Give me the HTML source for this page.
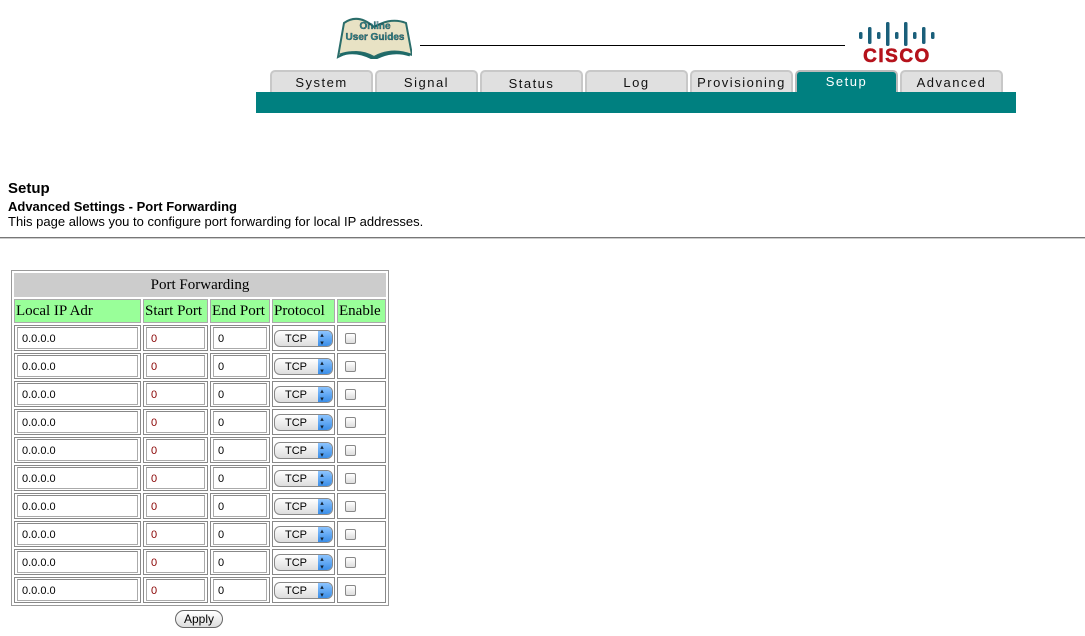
<!DOCTYPE html>
<html><head><meta charset="utf-8"><style>
body{margin:0;width:1085px;height:636px;background:#fff;position:relative;overflow:hidden;font-family:"Liberation Sans",sans-serif}
.a{position:absolute}
.tab{position:absolute;top:70px;height:22px;width:100px;background:#e0e0e0;border:2px solid #c8c8c8;border-bottom:none;border-radius:5px 5px 0 0;box-sizing:border-box;text-align:center;font-size:13px;letter-spacing:1.5px;line-height:22px;color:#111}
table{position:absolute;left:11px;top:270px;border:1px solid #999;border-spacing:2px;border-collapse:separate;table-layout:fixed;width:376px}
td{padding:0;box-sizing:border-box;border:1px solid #888;height:26px;font-family:"Liberation Serif",serif;font-size:15px;overflow:hidden}
td.h{background:#ccc;text-align:center;height:24px;border:none}
td.g{background:#9f9;height:24px;border:1px solid #aaa;white-space:nowrap;padding-left:1px}
.in{display:block;margin:0 2px;height:22px;border:1px solid #aaa;border-top-color:#888;font-family:"Liberation Sans",sans-serif;font-size:11px;line-height:22px;padding-left:4px;box-sizing:border-box}
.sel{display:block;margin:0 1px;width:59px;height:17px;border:1px solid #888;border-radius:6px;background:linear-gradient(#fff,#ddd);font-family:"Liberation Sans",sans-serif;font-size:11px;line-height:16px;position:relative;box-sizing:border-box;padding-left:10px}
.sel:after{content:"▴▾";position:absolute;right:0;top:0;width:14px;height:15px;background:linear-gradient(#8cc4ff,#3b8ee8);border-radius:0 5px 5px 0;font-size:7px;line-height:7px;color:#123;text-align:center;writing-mode:vertical-lr}
.cb{display:block;margin-left:7px;width:11px;height:11px;border:1px solid #888;border-radius:2px;background:linear-gradient(#fff,#ddd);box-sizing:border-box}
</style></head><body>
<div class="a" style="left:336px;top:15px;width:76px;height:44px">
<svg width="76" height="44"><path d="M8 8 Q22 -2 38 12 Q55 2 70 8 L76 40 Q56 32 38 42 Q20 32 2 42 Z" fill="#e8e2c4" stroke="#2a6d6a" stroke-width="2"/><path d="M4 40 Q20 34 38 44 Q56 34 74 40" fill="none" stroke="#1f6a68" stroke-width="3"/></svg>
<div class="a" style="left:4px;top:6px;width:70px;text-align:center;font-size:10px;font-weight:bold;color:#2a8a8c;line-height:11px;-webkit-text-stroke:0.3px #123">Online<br>User Guides</div></div>
<div class="a" style="left:420px;top:45px;width:425px;height:1px;background:#000"></div>
<svg class="a" style="left:858px;top:20px" width="80" height="44">
<g fill="#1a5f7a"><rect x="1" y="12" width="3.5" height="7" rx="1.5"/><rect x="10" y="7" width="3.5" height="17" rx="1.5"/><rect x="19" y="12" width="3.5" height="7" rx="1.5"/><rect x="28" y="2" width="3.5" height="24" rx="1.5"/><rect x="37" y="12" width="3.5" height="7" rx="1.5"/><rect x="46" y="2" width="3.5" height="24" rx="1.5"/><rect x="55" y="12" width="3.5" height="7" rx="1.5"/><rect x="64" y="7" width="3.5" height="17" rx="1.5"/><rect x="73" y="12" width="3.5" height="7" rx="1.5"/></g>
<text x="39" y="42" text-anchor="middle" font-family="Liberation Sans" font-weight="bold" font-size="19" fill="#b5121b" letter-spacing="1.5" stroke="#b5121b" stroke-width="0.6">CISCO</text></svg>
<div class="tab" style="left:270px;width:103px">System</div>
<div class="tab" style="left:375px;width:103px">Signal</div>
<div class="tab" style="left:480px;width:103px;line-height:24px">Status</div>
<div class="tab" style="left:585px;width:103px">Log</div>
<div class="tab" style="left:690px;width:103px">Provisioning</div>
<div class="tab" style="left:795px;width:103px;background:#008080;color:#fff;border-color:#bbb;line-height:20px">Setup</div>
<div class="tab" style="left:900px;width:103px">Advanced</div>
<div class="a" style="left:256px;top:92px;width:760px;height:21px;background:#008080"></div>
<div class="a" style="left:8px;top:180px;font-size:15px;font-weight:bold">Setup</div>
<div class="a" style="left:8px;top:199px;font-size:13px;font-weight:bold">Advanced Settings - Port Forwarding</div>
<div class="a" style="left:8px;top:214px;font-size:13px">This page allows you to configure port forwarding for local IP addresses.</div>
<div class="a" style="left:0;top:237px;width:1085px;height:1px;background:#777;border-bottom:1px solid #ccc"></div>
<table>
<colgroup><col style="width:127px"><col style="width:65px"><col style="width:60px"><col style="width:63px"><col style="width:49px"></colgroup>
<tr><td class="h" colspan="5">Port Forwarding</td></tr>
<tr><td class="g">Local IP Adr</td><td class="g">Start Port</td><td class="g">End Port</td><td class="g">Protocol</td><td class="g">Enable</td></tr>
<tr><td><span class="in">0.0.0.0</span></td><td><span class="in" style="color:#800">0</span></td><td><span class="in">0</span></td><td><span class="sel">TCP</span></td><td><span class="cb"></span></td></tr>
<tr><td><span class="in">0.0.0.0</span></td><td><span class="in" style="color:#800">0</span></td><td><span class="in">0</span></td><td><span class="sel">TCP</span></td><td><span class="cb"></span></td></tr>
<tr><td><span class="in">0.0.0.0</span></td><td><span class="in" style="color:#800">0</span></td><td><span class="in">0</span></td><td><span class="sel">TCP</span></td><td><span class="cb"></span></td></tr>
<tr><td><span class="in">0.0.0.0</span></td><td><span class="in" style="color:#800">0</span></td><td><span class="in">0</span></td><td><span class="sel">TCP</span></td><td><span class="cb"></span></td></tr>
<tr><td><span class="in">0.0.0.0</span></td><td><span class="in" style="color:#800">0</span></td><td><span class="in">0</span></td><td><span class="sel">TCP</span></td><td><span class="cb"></span></td></tr>
<tr><td><span class="in">0.0.0.0</span></td><td><span class="in" style="color:#800">0</span></td><td><span class="in">0</span></td><td><span class="sel">TCP</span></td><td><span class="cb"></span></td></tr>
<tr><td><span class="in">0.0.0.0</span></td><td><span class="in" style="color:#800">0</span></td><td><span class="in">0</span></td><td><span class="sel">TCP</span></td><td><span class="cb"></span></td></tr>
<tr><td><span class="in">0.0.0.0</span></td><td><span class="in" style="color:#800">0</span></td><td><span class="in">0</span></td><td><span class="sel">TCP</span></td><td><span class="cb"></span></td></tr>
<tr><td><span class="in">0.0.0.0</span></td><td><span class="in" style="color:#800">0</span></td><td><span class="in">0</span></td><td><span class="sel">TCP</span></td><td><span class="cb"></span></td></tr>
<tr><td><span class="in">0.0.0.0</span></td><td><span class="in" style="color:#800">0</span></td><td><span class="in">0</span></td><td><span class="sel">TCP</span></td><td><span class="cb"></span></td></tr>
</table>
<div class="a" style="left:175px;top:610px;width:46px;height:16px;border:1px solid #666;border-radius:9px;background:linear-gradient(#fff,#ddd);font-size:12px;text-align:center;line-height:16px">Apply</div>
</body></html>
